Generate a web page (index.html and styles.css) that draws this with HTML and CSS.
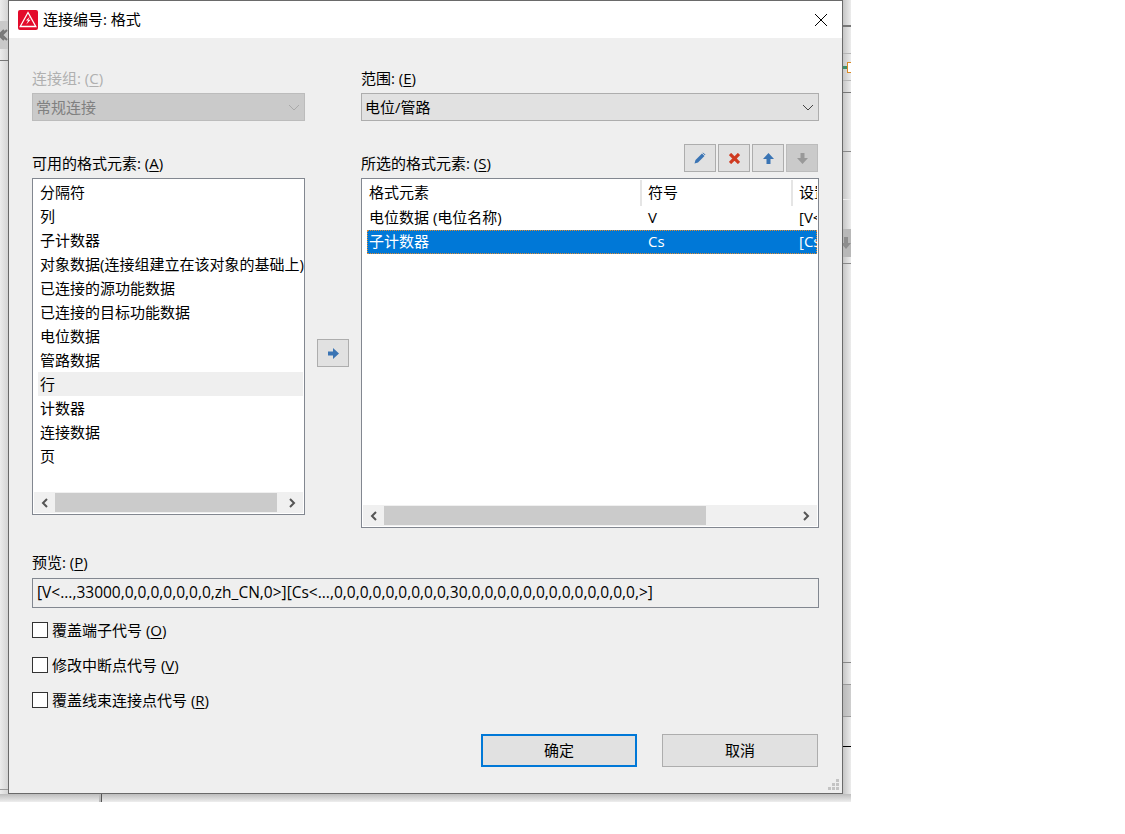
FILE: index.html
```html
<!DOCTYPE html>
<html lang="zh-CN">
<head>
<meta charset="utf-8">
<title>连接编号: 格式</title>
<link rel="stylesheet" href="styles.css">
</head>
<body>
<div class="backdrop">
  <div class="bd-tab"><svg width="8" height="12" viewBox="0 0 8 12"><path d="M7 1 2 6l5 5M4 1 0 5v2l4 4" fill="none" stroke="#777" stroke-width="2"/></svg></div>
  <div class="bd-line l1"></div>
  <div class="bd-line l2"></div>
  <div class="bd-line r1"></div>
  <div class="bd-line r2"></div>
  <div class="bd-line r3"></div>
  <div class="bd-line r4"></div>
  <div class="bd-line r5"></div>
  <div class="bd-line r6"></div>
  <div class="bd-line r7"></div>
  <div class="bd-line r8"></div>
  <div class="bd-line r9"></div>
  <div class="bd-line r11"></div>
  <div class="bd-line r10"></div>
  <div class="bd-r-band"></div>
  <div class="bd-r-tab"><svg width="8" height="12" viewBox="0 0 8 12"><path d="M1 0H5V6H8L3 12-2 6H1Z" fill="#8e8e8e"/></svg></div>
  <div class="bd-r-plus"></div>
  <div class="bd-r-icon"></div>
  <div class="bd-bottom"></div>
  <div class="bd-vert"></div>
</div>

<div class="dialog">
  <header class="titlebar">
    <svg class="app-icon" width="20" height="20" viewBox="0 0 20 20"><rect width="20" height="20" rx="2" fill="#e30b2b"/><path d="M10 2.5 17.8 16.5H2.2Z" fill="none" stroke="#fff" stroke-width="1.3"/><path d="M12 6.5 8 10.6h2.2L8.2 14.6 12.6 9.8H10.2Z" fill="#fff"/></svg>
    <span class="title">连接编号: 格式</span>
    <svg class="close" width="14" height="14" viewBox="0 0 14 14"><path d="M1 1 13 13M13 1 1 13" stroke="#000" stroke-width="1" fill="none"/></svg>
  </header>

  <main class="content">
    <div class="top-row">
      <div class="col-left">
        <label class="lbl disabled">连接组: (<u>C</u>)</label>
        <div class="combo combo-disabled"><span>常规连接</span><svg width="12" height="7" viewBox="0 0 12 7"><path d="M1 1 6 6 11 1" fill="none" stroke="#a9a9a9"/></svg></div>
      </div>
      <div class="col-right">
        <label class="lbl">范围: (<u>E</u>)</label>
        <div class="combo"><span>电位/管路</span><svg width="12" height="7" viewBox="0 0 12 7"><path d="M1 1 6 6 11 1" fill="none" stroke="#444"/></svg></div>
      </div>
    </div>

    <div class="mid-row">
      <div class="col-left">
        <div class="list-head"><label class="lbl">可用的格式元素: (<u>A</u>)</label></div>
        <div class="listbox left-box">
          <ul class="items">
            <li>分隔符</li>
            <li>列</li>
            <li>子计数器</li>
            <li>对象数据(连接组建立在该对象的基础上)</li>
            <li>已连接的源功能数据</li>
            <li>已连接的目标功能数据</li>
            <li>电位数据</li>
            <li>管路数据</li>
            <li class="hover">行</li>
            <li>计数器</li>
            <li>连接数据</li>
            <li>页</li>
          </ul>
          <div class="hscroll">
            <span class="sb-arrow"><svg width="7" height="10" viewBox="0 0 7 10"><path d="M6 1 2 5l4 4" fill="none" stroke="#555" stroke-width="2"/></svg></span>
            <div class="track"><div class="thumb thumb-left"></div></div>
            <span class="sb-arrow"><svg width="7" height="10" viewBox="0 0 7 10"><path d="M1 1l4 4-4 4" fill="none" stroke="#555" stroke-width="2"/></svg></span>
          </div>
        </div>
      </div>

      <div class="move-col">
        <button class="tool"><svg width="11" height="11" viewBox="0 0 11 11"><path d="M5 0 11 5.5 5 11V7.5H0V3.5H5Z" fill="#3a74b4"/></svg></button>
      </div>

      <div class="col-right">
        <div class="list-head">
          <label class="lbl">所选的格式元素: (<u>S</u>)</label>
          <div class="tools">
            <button class="tool"><svg width="12" height="12" viewBox="0 0 12 12"><path d="M0.5 11.5 1.5 8 8 1.5 10.5 4 4 10.5Z" fill="#3a74b4"/><path d="M9 .8 11.2 3" stroke="#3a74b4"/></svg></button>
            <button class="tool"><svg width="11" height="11" viewBox="0 0 11 11"><path d="M1 1l9 9M10 1l-9 9" stroke="#cf3a20" stroke-width="3.2"/></svg></button>
            <button class="tool"><svg width="11" height="11" viewBox="0 0 11 11"><path d="M5.5 0 11 6H7.5V11H3.5V6H0Z" fill="#3a74b4"/></svg></button>
            <button class="tool tool-disabled"><svg width="11" height="11" viewBox="0 0 11 11"><path d="M5.5 11 11 5H7.5V0H3.5V5H0Z" fill="#999"/></svg></button>
          </div>
        </div>
        <div class="listbox right-box">
          <div class="table">
            <div class="thead">
              <div class="c1">格式元素</div><div class="c2">符号</div><div class="c3">设置</div>
            </div>
            <div class="tr">
              <div class="c1">电位数据 (电位名称)</div><div class="c2">V</div><div class="c3">[V&lt;...</div>
            </div>
            <div class="tr selected">
              <div class="c1">子计数器</div><div class="c2">Cs</div><div class="c3">[Cs&lt;...</div>
            </div>
          </div>
          <div class="hscroll">
            <span class="sb-arrow"><svg width="7" height="10" viewBox="0 0 7 10"><path d="M6 1 2 5l4 4" fill="none" stroke="#555" stroke-width="2"/></svg></span>
            <div class="track"><div class="thumb thumb-right"></div></div>
            <span class="sb-arrow"><svg width="7" height="10" viewBox="0 0 7 10"><path d="M1 1l4 4-4 4" fill="none" stroke="#555" stroke-width="2"/></svg></span>
          </div>
        </div>
      </div>
    </div>

    <div class="preview">
      <label class="lbl">预览: (<u>P</u>)</label>
      <div class="preview-box">[V&lt;...,33000,0,0,0,0,0,0,0,zh_CN,0&gt;][Cs&lt;...,0,0,0,0,0,0,0,0,0,30,0,0,0,0,0,0,0,0,0,0,0,0,0,&gt;]</div>
    </div>

    <div class="checks">
      <label class="check"><span class="box"></span><span class="check-text">覆盖端子代号 (<u>O</u>)</span></label>
      <label class="check"><span class="box"></span><span class="check-text">修改中断点代号 (<u>V</u>)</span></label>
      <label class="check"><span class="box"></span><span class="check-text">覆盖线束连接点代号 (<u>R</u>)</span></label>
    </div>

    <footer class="actions">
      <button class="btn primary">确定</button>
      <button class="btn">取消</button>
    </footer>
  </main>
  <svg class="grip" width="12" height="12" viewBox="0 0 12 12"><path d="M8 0h3v3H8ZM4 4h3v3H4ZM8 4h3v3H8ZM0 8h3v3H0ZM4 8h3v3H4ZM8 8h3v3H8Z" fill="#c4c4c4"/></svg>
</div>
</body>
</html>
```
FILE: styles.css
```css
* { box-sizing: border-box; }
html, body { margin: 0; padding: 0; height: 100%; background: #fff; }
body {
  position: relative;
  width: 1125px;
  height: 834px;
  overflow: hidden;
  font-family: "Open Sans", "Noto Sans CJK SC", sans-serif;
  font-size: 15px;
  color: #000;
}
u { text-underline-offset: 2px; }

.backdrop {
  position: absolute;
  left: 0;
  top: 0;
  width: 851px;
  height: 802px;
  background: linear-gradient(90deg, #ececec 0, #d4d4d4 8px);
}
.backdrop::after {
  content: "";
  position: absolute;
  left: 843px;
  top: 0;
  width: 8px;
  height: 802px;
  background: linear-gradient(90deg, #c6c6c6 0, #ececec 100%);
}
.bd-tab {
  position: absolute;
  left: 0;
  top: 21px;
  width: 8px;
  height: 28px;
  background: #c9c9c9;
  padding-top: 8px;
  z-index: 1;
}
.bd-tab svg { display: block; }
.bd-line { position: absolute; height: 1px; background: #8a8a8a; z-index: 1; }
.l1 { left: 0; width: 8px; top: 60px; background: #777; }
.l2 { left: 0; width: 8px; top: 789px; background: #999; }
.r1 { left: 843px; width: 8px; top: 25px; height: 2px; background: #777; }
.r2 { left: 843px; width: 8px; top: 53px; background: #b5b5b5; }
.r3 { left: 843px; width: 8px; top: 80px; background: #b5b5b5; }
.r4 { left: 843px; width: 8px; top: 92px; background: #777; }
.r5 { left: 843px; width: 8px; top: 151px; background: #888; }
.r6 { left: 843px; width: 8px; top: 199px; background: #eee; }
.r7 { left: 843px; width: 8px; top: 263px; background: #888; }
.r8 { left: 843px; width: 8px; top: 662px; background: #888; }
.r9 { left: 843px; width: 8px; top: 684px; background: #999; }
.r11 { left: 843px; width: 8px; top: 716px; background: #999; }
.r10 { left: 843px; width: 8px; top: 746px; background: #000; }
.bd-r-band {
  position: absolute;
  left: 843px;
  top: 685px;
  width: 8px;
  height: 31px;
  background: linear-gradient(90deg, #b9b9b9, #cfcfcf);
  z-index: 1;
}
.bd-r-tab {
  position: absolute;
  left: 843px;
  top: 229px;
  width: 8px;
  height: 28px;
  background: #b8b8b8;
  padding-top: 8px;
  z-index: 1;
}
.bd-r-tab svg { display: block; }
.bd-r-plus {
  position: absolute;
  left: 843px;
  top: 66px;
  width: 4px;
  height: 3px;
  background: #3f8f6a;
  z-index: 1;
}
.bd-r-icon {
  position: absolute;
  left: 847px;
  top: 62px;
  width: 4px;
  height: 11px;
  border: 1px solid #d98a26;
  border-right: 0;
  background: #fff;
  z-index: 1;
}
.bd-bottom {
  position: absolute;
  left: 0;
  top: 794px;
  width: 851px;
  height: 8px;
  background: linear-gradient(180deg, #bdbdbd, #eeeeee);
  z-index: 1;
}
.bd-vert {
  position: absolute;
  left: 99px;
  top: 794px;
  width: 3px;
  height: 8px;
  background: linear-gradient(90deg, #bbb 0 2px, #555 2px);
  z-index: 1;
}

.dialog {
  position: absolute;
  left: 8px;
  top: 0;
  width: 835px;
  height: 794px;
  background: #efefef;
  border: 1px solid #6a6a6a;
  display: flex;
  flex-direction: column;
  z-index: 2;
}
.titlebar {
  height: 37px;
  background: #fff;
  display: flex;
  align-items: center;
  padding: 0 14px 0 9px;
  flex: none;
}
.app-icon { flex: none; }
.title { margin-left: 5px; padding-bottom: 2px; }
.close { margin-left: auto; }

.content {
  flex: 1;
  display: flex;
  flex-direction: column;
  padding: 31px 23px 0;
}
.lbl { display: block; line-height: 18px; height: 20px; white-space: nowrap; }
.disabled { color: #b0b0b0; }

.top-row { display: grid; grid-template-columns: 273px 458px; column-gap: 56px; }
.combo {
  height: 28px;
  margin-top: 4px;
  background: #e1e1e1;
  border: 1px solid #adadad;
  display: flex;
  align-items: center;
  justify-content: space-between;
  padding: 0 4px 0 3px;
}
.combo span { padding-bottom: 2px; }
.combo-disabled { background: #cacaca; border-color: #bcbcbc; color: #808080; }

.mid-row { display: grid; grid-template-columns: 273px 56px 458px; margin-top: 23px; }
.list-head {
  height: 34px;
  display: flex;
  align-items: flex-end;
  justify-content: space-between;
  padding-bottom: 4px;
}
.tools { display: flex; gap: 2px; margin-right: 1px; margin-bottom: 2px; }
.tool {
  width: 32px;
  height: 28px;
  padding: 0;
  background: #e1e1e1;
  border: 1px solid #adadad;
  display: flex;
  align-items: center;
  justify-content: center;
}
.tool-disabled { background: #cacaca; border-color: #bcbcbc; }
.move-col { padding: 195px 0 0 12px; }

.listbox {
  background: #fff;
  border: 1px solid #828790;
  padding: 1px;
  display: flex;
  flex-direction: column;
  justify-content: space-between;
}
.left-box { height: 337px; }
.right-box { height: 350px; }
.items { list-style: none; margin: 0; padding: 0 0 0 4px; }
.items li {
  height: 24px;
  line-height: 24px;
  padding-left: 2px;
  white-space: nowrap;
}
.items .hover { background: #efefef; }

.hscroll {
  height: 21px;
  display: flex;
  align-items: center;
  background: #f0f0f0;
}
.sb-arrow { flex: none; width: 21px; display: flex; align-items: center; justify-content: center; }
.track { flex: 1; height: 19px; display: flex; }
.thumb { background: #cbcbcb; height: 100%; }
.thumb-left { width: 222px; }
.thumb-right { width: 322px; }

.table { margin: 0 0 0 4px; width: 450px; overflow: hidden; }
.thead, .tr {
  display: grid;
  grid-template-columns: 275px 151px 120px;
  white-space: nowrap;
}
.thead { height: 26px; line-height: 24px; }
.thead .c1, .thead .c2 { border-right: 2px solid #e5e5e5; }
.thead > div { padding-left: 2px; }
.tr { height: 24px; line-height: 22px; }
.tr > div { padding-left: 2px; }
.selected {
  background: #0078d7;
  color: #fff;
  outline: 1px dotted #e08a30;
  outline-offset: -1px;
}
.thead > .c2, .thead > .c3, .tr > .c2, .tr > .c3 { padding-left: 6px; }

.preview { margin-top: 25px; }
.preview-box {
  margin-top: 5px;
  height: 30px;
  line-height: 27px;
  font-size: 15.5px;
  background: #efefef;
  border: 1px solid #828790;
  padding-left: 4px;
  white-space: nowrap;
}

.checks { margin-top: 12px; display: flex; flex-direction: column; gap: 15px; }
.check { display: flex; align-items: center; height: 20px; white-space: nowrap; }
.check-text { padding-bottom: 2px; }
.box {
  width: 16px;
  height: 16px;
  background: #fff;
  border: 1px solid #333;
  margin-right: 4px;
  flex: none;
}

.actions { margin-top: 24px; display: flex; justify-content: flex-end; gap: 25px; padding-right: 1px; }
.btn {
  width: 156px;
  height: 33px;
  background: #e1e1e1;
  border: 1px solid #adadad;
  font: inherit;
  color: #000;
  padding: 0 0 2px;
}
.primary { border: 2px solid #0078d7; }

.grip { position: absolute; right: 2px; bottom: 2px; }
```
